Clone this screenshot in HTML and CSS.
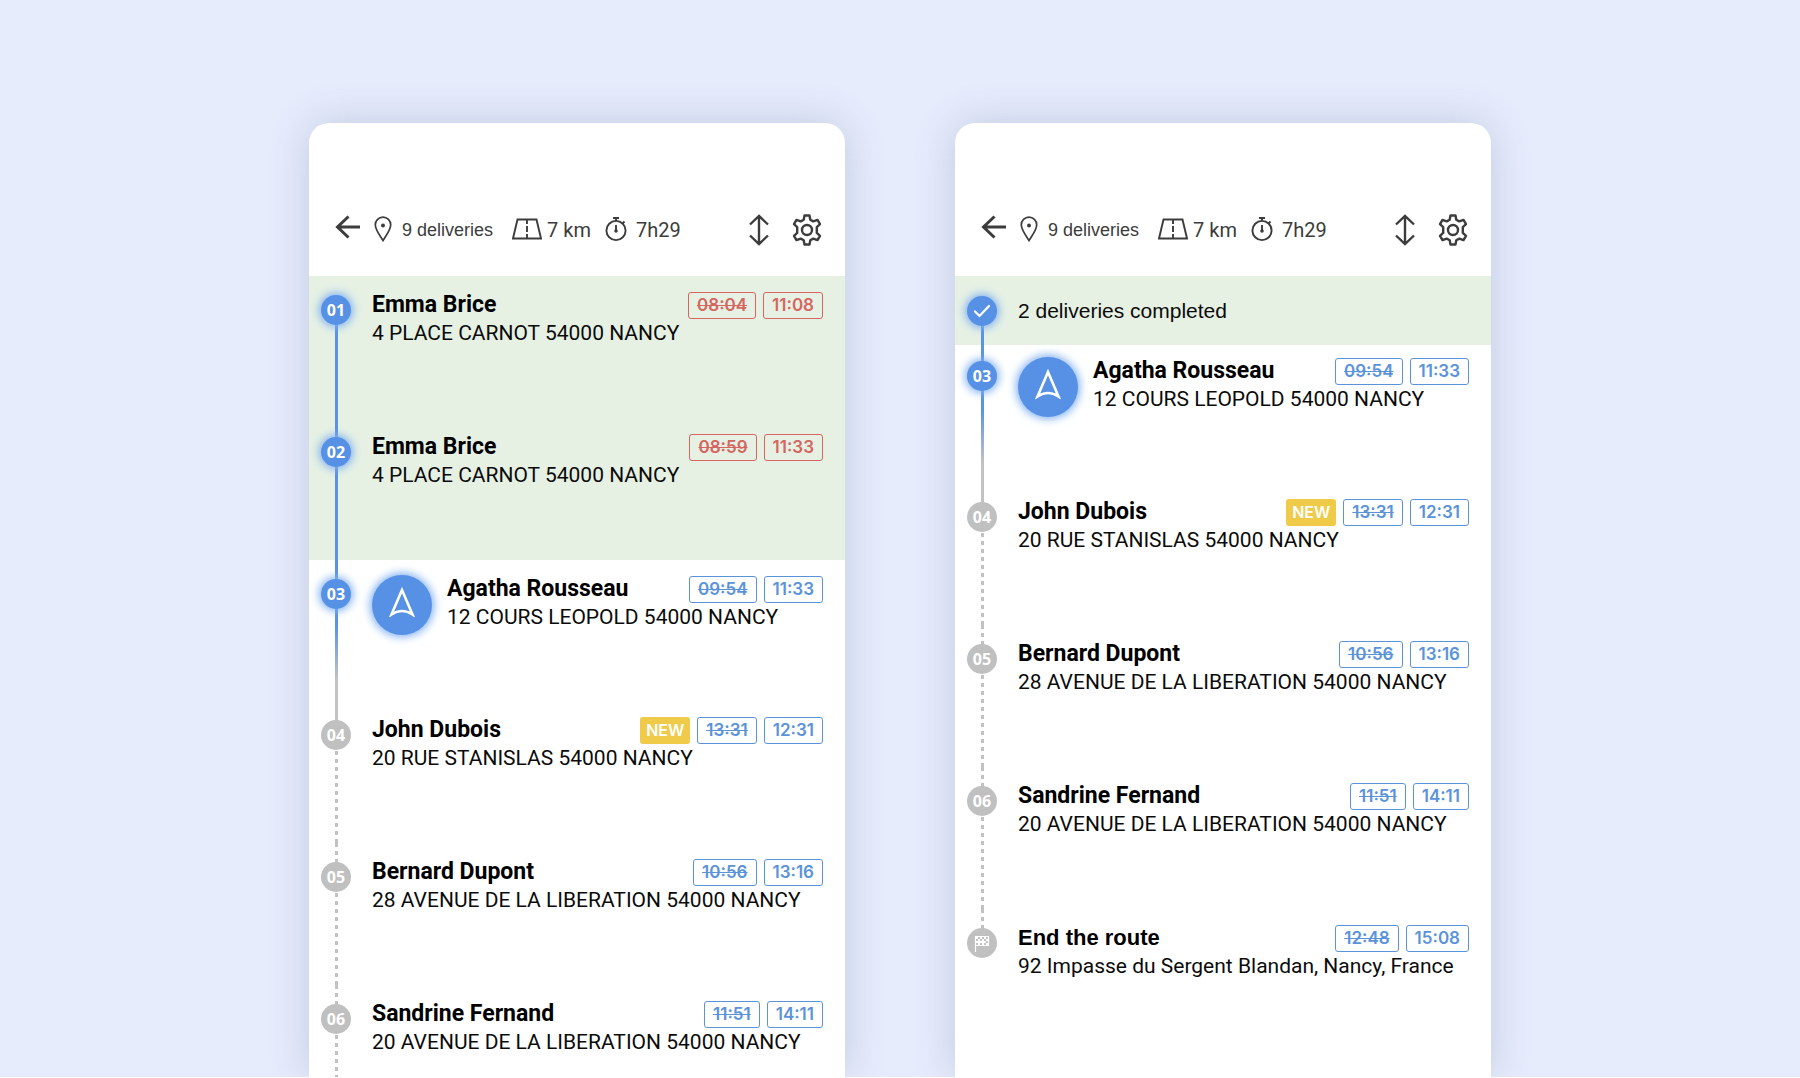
FILE: index.html
```
<!DOCTYPE html>
<html lang="en">
<head>
    <meta charset="UTF-8">
    <title>Delivery route</title>
    <link rel="stylesheet" href="styles.css">
</head>
<body>

<!-- shared icons -->
<svg class="sprite" aria-hidden="true">
    <symbol id="back" viewBox="0 0 26 24"><path d="M13.500 1.500 2.500 12 13.500 22.500M2.500 12H25" fill="none" stroke="currentColor" stroke-width="3"/></symbol>
    <symbol id="pin" viewBox="0 0 18 26"><path d="M9 24.500C6 19.500 1.300 14 1.300 8.800a7.700 7.700 0 0 1 15.400 0C16.700 14 12 19.500 9 24.500z" fill="none" stroke="currentColor" stroke-width="1.700"/><circle cx="9" cy="9.500" r="2" fill="currentColor"/></symbol>
    <symbol id="road" viewBox="0 0 30 22"><path d="M5.500 1.500H24.500L29 20.500H1z" fill="none" stroke="currentColor" stroke-width="1.900"/><path d="M15 2v4M15 8v6M15 16v4" stroke="currentColor" stroke-width="1.900"/></symbol>
    <symbol id="watch" viewBox="0 0 22 26"><circle cx="11" cy="14.500" r="9.600" fill="none" stroke="currentColor" stroke-width="1.900"/><path d="M8 2h6M11 2v3M17.500 7.500l2-2M11 9v6" fill="none" stroke="currentColor" stroke-width="1.900"/><circle cx="11" cy="15" r="1.800" fill="currentColor"/></symbol>
    <symbol id="sort" viewBox="0 0 20 32"><path d="M1 10.500 10 2l9 8.500M1 21.500 10 30l9-8.500M10 2v28" fill="none" stroke="currentColor" stroke-width="2.400"/></symbol>
    <symbol id="gear" viewBox="0 0 32 32"><path d="M13.500 1.500h5l.8 4.200 3 1.700 4.200-1.500 2.500 4.300-3.200 2.900v5.800l3.200 2.900-2.500 4.300-4.200-1.500-3 1.700-.8 4.200h-5l-.8-4.200-3-1.700-4.200 1.500L3 21.800l3.200-2.900v-5.800L3 10.200l2.500-4.300 4.200 1.500 3-1.700z" fill="none" stroke="currentColor" stroke-width="2.400" stroke-linejoin="round"/><circle cx="16" cy="16" r="5" fill="none" stroke="currentColor" stroke-width="2.400"/></symbol>
    <symbol id="arrow" viewBox="0 0 26 30"><path d="M13 3 23.500 27.500Q13 20.500 2.500 27.500z" fill="none" stroke="currentColor" stroke-width="2.600"/></symbol>
    <symbol id="check" viewBox="0 0 18 14"><path d="M2 7.500l4.500 4.500 9.500-10" fill="none" stroke="currentColor" stroke-width="2.200" stroke-linecap="round"/></symbol>
    <symbol id="flag" viewBox="0 0 16 17"><path d="M1.500 1v16M1.500 1.500h13v9h-13" fill="none" stroke="currentColor" stroke-width="1.200"/><path d="M2 2h2v2h2v-2h2v2h2v-2h2v2h2v2h-2v2h2v2h-2v-2h-2v2h-2v-2h-2v2h-2v-2h-2v-2h2v-2h-2zM6 4v2h2v-2zM10 4v2h2v-2z" fill="currentColor"/></symbol>
</svg>

<div class="phones">
    <section class="phone">
        <header class="bar">
            <button class="icon_bt" aria-label="Back"><svg class="back"><use href="#back"/></svg></button>
            <span class="stat deliveries"><svg class="pin"><use href="#pin"/></svg>9 deliveries</span>
            <span class="stat distance"><svg class="road"><use href="#road"/></svg>7 km</span>
            <span class="stat time"><svg class="watch"><use href="#watch"/></svg>7h29</span>
            <button class="icon_bt sort_bt" aria-label="Reorder"><svg class="sort"><use href="#sort"/></svg></button>
            <button class="icon_bt" aria-label="Settings"><svg class="gear"><use href="#gear"/></svg></button>
        </header>
        <ol class="route">
            <li class="stop done first late">
                <span class="node">01</span>
                <div class="info">
                    <div class="head"><h2>Emma Brice</h2><s class="pill">08:04</s><span class="pill">11:08</span></div>
                    <p>4 PLACE CARNOT 54000 NANCY</p>
                </div>
            </li>
            <li class="stop done late">
                <span class="node">02</span>
                <div class="info">
                    <div class="head"><h2>Emma Brice</h2><s class="pill">08:59</s><span class="pill">11:33</span></div>
                    <p>4 PLACE CARNOT 54000 NANCY</p>
                </div>
            </li>
            <li class="stop current">
                <span class="node">03</span>
                <button class="go_bt" aria-label="Navigate"><svg class="arrow"><use href="#arrow"/></svg></button>
                <div class="info">
                    <div class="head"><h2>Agatha Rousseau</h2><s class="pill">09:54</s><span class="pill">11:33</span></div>
                    <p>12 COURS LEOPOLD 54000 NANCY</p>
                </div>
            </li>
            <li class="stop after_current">
                <span class="node">04</span>
                <div class="info">
                    <div class="head"><h2>John Dubois</h2><span class="new">NEW</span><s class="pill">13:31</s><span class="pill">12:31</span></div>
                    <p>20 RUE STANISLAS 54000 NANCY</p>
                </div>
            </li>
            <li class="stop">
                <span class="node">05</span>
                <div class="info">
                    <div class="head"><h2>Bernard Dupont</h2><s class="pill">10:56</s><span class="pill">13:16</span></div>
                    <p>28 AVENUE DE LA LIBERATION 54000 NANCY</p>
                </div>
            </li>
            <li class="stop">
                <span class="node">06</span>
                <div class="info">
                    <div class="head"><h2>Sandrine Fernand</h2><s class="pill">11:51</s><span class="pill">14:11</span></div>
                    <p>20 AVENUE DE LA LIBERATION 54000 NANCY</p>
                </div>
            </li>
        </ol>
    </section>

    <section class="phone">
        <header class="bar">
            <button class="icon_bt" aria-label="Back"><svg class="back"><use href="#back"/></svg></button>
            <span class="stat deliveries"><svg class="pin"><use href="#pin"/></svg>9 deliveries</span>
            <span class="stat distance"><svg class="road"><use href="#road"/></svg>7 km</span>
            <span class="stat time"><svg class="watch"><use href="#watch"/></svg>7h29</span>
            <button class="icon_bt sort_bt" aria-label="Reorder"><svg class="sort"><use href="#sort"/></svg></button>
            <button class="icon_bt" aria-label="Settings"><svg class="gear"><use href="#gear"/></svg></button>
        </header>
        <ol class="route">
            <li class="stop done summary first">
                <span class="node"><svg class="check"><use href="#check"/></svg></span>
                <p class="completed">2 deliveries completed</p>
            </li>
            <li class="stop current after_summary">
                <span class="node">03</span>
                <button class="go_bt" aria-label="Navigate"><svg class="arrow"><use href="#arrow"/></svg></button>
                <div class="info">
                    <div class="head"><h2>Agatha Rousseau</h2><s class="pill">09:54</s><span class="pill">11:33</span></div>
                    <p>12 COURS LEOPOLD 54000 NANCY</p>
                </div>
            </li>
            <li class="stop after_current">
                <span class="node">04</span>
                <div class="info">
                    <div class="head"><h2>John Dubois</h2><span class="new">NEW</span><s class="pill">13:31</s><span class="pill">12:31</span></div>
                    <p>20 RUE STANISLAS 54000 NANCY</p>
                </div>
            </li>
            <li class="stop">
                <span class="node">05</span>
                <div class="info">
                    <div class="head"><h2>Bernard Dupont</h2><s class="pill">10:56</s><span class="pill">13:16</span></div>
                    <p>28 AVENUE DE LA LIBERATION 54000 NANCY</p>
                </div>
            </li>
            <li class="stop">
                <span class="node">06</span>
                <div class="info">
                    <div class="head"><h2>Sandrine Fernand</h2><s class="pill">11:51</s><span class="pill">14:11</span></div>
                    <p>20 AVENUE DE LA LIBERATION 54000 NANCY</p>
                </div>
            </li>
            <li class="stop last">
                <span class="node"><svg class="flag"><use href="#flag"/></svg></span>
                <div class="info">
                    <div class="head"><h2 class="end">End the route</h2><s class="pill">12:48</s><span class="pill">15:08</span></div>
                    <p>92 Impasse du Sergent Blandan, Nancy, France</p>
                </div>
            </li>
        </ol>
    </section>
</div>

</body>
</html>
```
FILE: styles.css
```
*{
    margin: 0;
    padding: 0;
    box-sizing: border-box;
}
body{
    height: 100vh;
    padding-bottom: 1px;
    overflow: hidden;
    background: #fff;
    font-family: Roboto, sans-serif;
    color: #0b0b0b;
}
.sprite{
    position: absolute;
    width: 0;
    height: 0;
}
.phones{
    display: flex;
    justify-content: center;
    gap: 110px;
    height: 100%;
    padding: 123px 20px 0;
    overflow: hidden;
    background: #e6ecfc;
}
.phone{
    flex: 0 1 536px;
    min-width: 0;
    background: #fff;
    border-radius: 20px 20px 0 0;
    box-shadow: 0 0 40px rgba(70,80,130,.22);
}

/* top bar */
.bar{
    display: flex;
    align-items: center;
    height: 153px;
    padding: 61px 22px 0 26px;
    color: #3c3c3c;
}
.icon_bt{
    display: flex;
    border: 0;
    background: none;
    color: inherit;
    cursor: pointer;
}
.stat{
    display: flex;
    align-items: center;
    font-size: 20px;
    line-height: 24px;
    white-space: nowrap;
}
.deliveries{
    gap: 10px;
    margin-left: 13px;
    font-family: "Liberation Sans", sans-serif;
    font-size: 18px;
}
.distance{
    gap: 5px;
    margin-left: 19px;
}
.time{
    gap: 9px;
    margin-left: 14px;
}
.sort_bt{
    margin-left: auto;
    margin-right: 22px;
}
.back{
    width: 26px;
    height: 24px;
    margin-bottom: 6px;
}
.pin{
    width: 18px;
    height: 26px;
}
.road{
    width: 30px;
    height: 22px;
}
.watch{
    width: 22px;
    height: 26px;
}
.sort{
    width: 20px;
    height: 32px;
}
.gear{
    width: 32px;
    height: 32px;
}
.stat svg{
    margin-bottom: 3px;
}

/* route */
.route{
    list-style: none;
}
.stop{
    position: relative;
    display: flex;
    align-items: flex-start;
    height: 142px;
    padding: 15px 22px 0 12px;
}
.current{
    height: 141px;
}
.done{
    background: #e6f1e4;
}
/* the line between the stops runs behind the nodes */
.stop::before,
.stop::after{
    content: "";
    position: absolute;
    left: 26px;
    width: 3px;
}
.stop::before{
    top: 0;
    height: 34px;
    background: repeating-linear-gradient(#c2c2c2 0 4px, transparent 4px 8px);
}
.stop::after{
    top: 34px;
    bottom: 0;
    background: repeating-linear-gradient(#c2c2c2 0 4px, transparent 4px 8px);
}
.done::before,
.done::after,
.current::before{
    background: #5b93e3;
}
.current::after{
    background: linear-gradient(#5b93e3 30%, #c2c2c2 80%);
}
.after_current::before{
    background: #c2c2c2;
}
.first::before,
.last::after{
    display: none;
}
.node{
    position: relative;
    z-index: 1;
    display: flex;
    align-items: center;
    justify-content: center;
    flex: none;
    width: 30px;
    height: 30px;
    margin: 4px 21px 0 0;
    border-radius: 50%;
    background: #c0c0c0;
    color: #fff;
    font: 700 16px/30px "Open Sans", sans-serif;
}
.done .node,
.current .node{
    background: #5791e5;
    box-shadow: 0 0 8px 2px #7fb0f3;
}
.go_bt{
    display: flex;
    align-items: center;
    justify-content: center;
    flex: none;
    width: 60px;
    height: 60px;
    margin-right: 15px;
    border: 0;
    border-radius: 50%;
    background: #5791e5;
    box-shadow: 0 0 8px 2px #7fb0f3;
    color: #fff;
    cursor: pointer;
}
.arrow{
    width: 26px;
    height: 30px;
    margin-bottom: 6px;
}
.check{
    width: 18px;
    height: 14px;
}
.flag{
    width: 16px;
    height: 17px;
}
.info{
    flex: 1;
    min-width: 0;
}
.head{
    display: flex;
    align-items: center;
    gap: 7px;
    height: 28px;
}
h2{
    margin-right: auto;
    font-size: 23px;
    line-height: 28px;
    font-weight: 700;
    color: #000;
    white-space: nowrap;
}
.info p{
    font-size: 21px;
    line-height: 28px;
    white-space: nowrap;
}
.end{
    font-family: "Liberation Sans", sans-serif;
    font-size: 22px;
}
.pill{
    height: 27px;
    padding: 0 8px;
    border: 1px solid #5b93db;
    border-radius: 3px;
    color: #5b93db;
    font: 600 17px/25px Inter, sans-serif;
}
.late .pill{
    border-color: #d4665f;
    color: #d4665f;
}
.new{
    height: 27px;
    padding: 0 6px;
    border-radius: 3px;
    background: #efcb49;
    color: #fff;
    font: 600 16px/27px Inter, sans-serif;
}

/* collapsed deliveries */
.summary{
    align-items: center;
    height: 69px;
    padding-top: 0;
}
.summary .node{
    margin-top: 0;
}
.completed{
    font: 400 21px/28px "Liberation Sans", sans-serif;
}
.after_summary{
    height: 138px;
    padding-top: 12px;
}
```
